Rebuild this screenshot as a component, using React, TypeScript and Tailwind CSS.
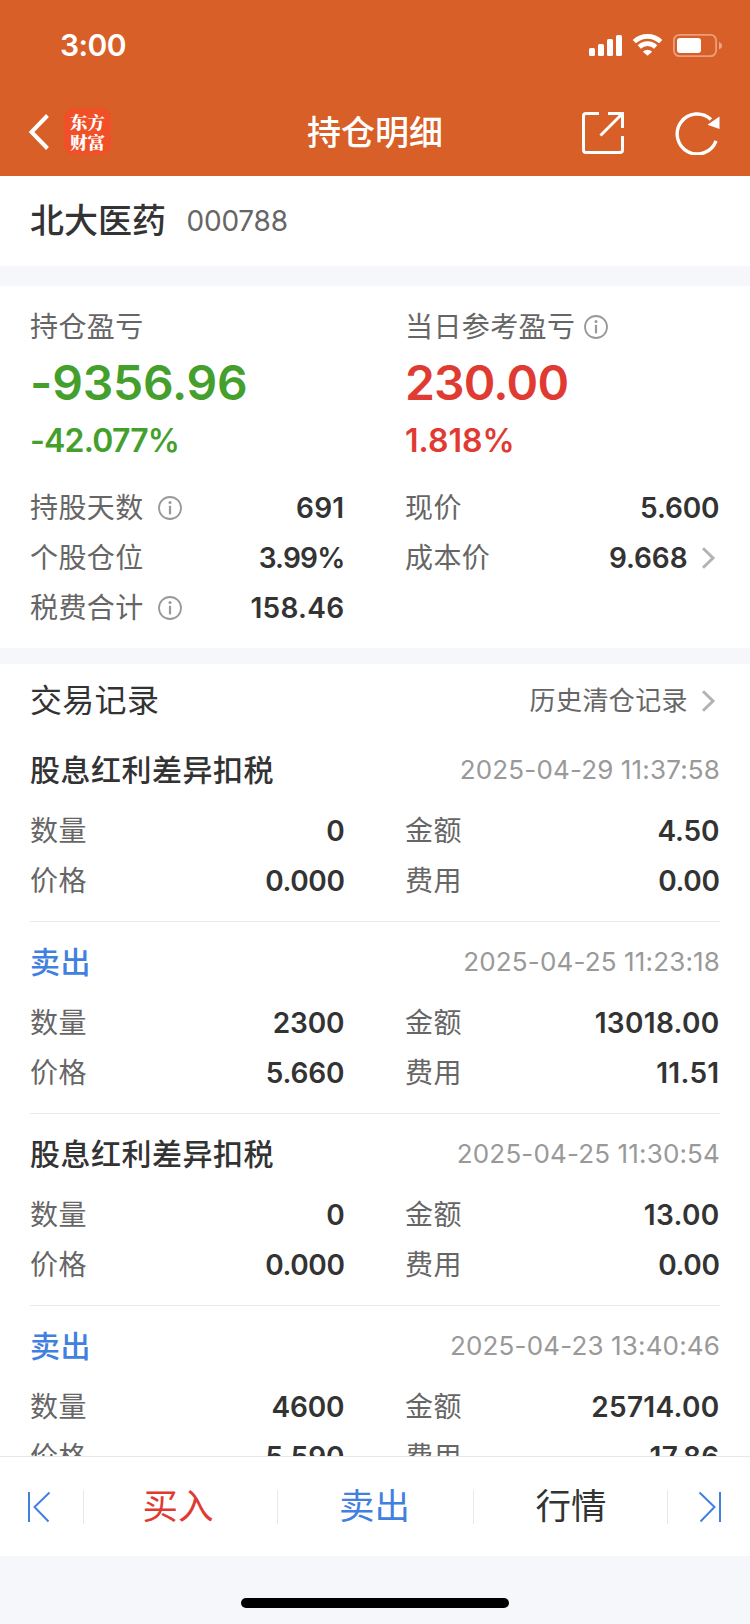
import type { ReactNode } from 'react'
import clsx from 'clsx'

interface TradeRecord {
  type: string
  isSell?: boolean
  time: string
  quantity: string
  amount: string
  price: string
  fee: string
}

const records: TradeRecord[] = [
  { type: '股息红利差异扣税', time: '2025-04-29 11:37:58', quantity: '0', amount: '4.50', price: '0.000', fee: '0.00' },
  { type: '卖出', isSell: true, time: '2025-04-25 11:23:18', quantity: '2300', amount: '13018.00', price: '5.660', fee: '11.51' },
  { type: '股息红利差异扣税', time: '2025-04-25 11:30:54', quantity: '0', amount: '13.00', price: '0.000', fee: '0.00' },
  { type: '卖出', isSell: true, time: '2025-04-23 13:40:46', quantity: '4600', amount: '25714.00', price: '5.590', fee: '17.86' },
]

// Inter's "1" is narrow and its "%" is wide, even the widths out
function valueTracking(value: string) {
  if (value.includes('%')) return 'tracking-[-0.8px]'
  if (value.includes('1')) return 'tracking-[0.3px]'
  if (value.includes('0.0')) return 'tracking-[-0.4px]'
  return 'tracking-[-0.1px]'
}

function InfoIcon({ className }: { className?: string }) {
  return (
    <svg className={clsx('h-6 w-6 shrink-0', className)} viewBox="0 0 24 24" fill="none" stroke="#999" strokeWidth="1.8">
      <circle cx="12" cy="12" r="11" />
      <path d="M12 9.800V18.400" strokeWidth="2.200" />
      <circle cx="12" cy="6.400" r="1.500" fill="#999" stroke="none" />
    </svg>
  )
}

function ChevronRight() {
  return (
    <svg className="ml-[13px] mr-[4px] h-6 w-[15px] shrink-0" viewBox="0 0 15 24" fill="none" stroke="#b3b3b3" strokeWidth="3">
      <path d="M2 2.200L12 12L2 21.800" />
    </svg>
  )
}

function StatRow({ label, value, info, arrow }: { label: string; value: string; info?: boolean; arrow?: boolean }) {
  return (
    <div className="flex h-[50px] items-center text-[28px] leading-[50px]">
      <span className="tracking-[0.4px] text-[#666]">{label}</span>
      {info && <InfoIcon className="ml-[14px]" />}
      <span className={clsx('ml-auto font-semibold text-[#333]', valueTracking(value))}>{value}</span>
      {arrow && <ChevronRight />}
    </div>
  )
}

function TwoColumns({ children }: { children: ReactNode }) {
  return <div className="grid grid-cols-[314.5px_314.5px] justify-between pl-[30px] pr-[30.5px]">{children}</div>
}

function RecordItem({ record }: { record: TradeRecord }) {
  return (
    <div className="h-48 shrink-0">
      <div className="flex h-[76px] items-center justify-between px-[30px] pt-[3px]">
        <span
          className={clsx(
            'text-[30px] font-medium leading-[40px] tracking-[0.5px]',
            record.isSell ? 'text-[#4280e0]' : 'text-[#333]'
          )}
        >
          {record.type}
        </span>
        <span className="text-[26px] leading-[40px] tracking-[0.15px] text-[#999]">{record.time}</span>
      </div>
      <TwoColumns>
        <StatRow label="数量" value={record.quantity} />
        <StatRow label="金额" value={record.amount} />
        <StatRow label="价格" value={record.price} />
        <StatRow label="费用" value={record.fee} />
      </TwoColumns>
      <div className="mx-[30px] mt-[15px] h-px bg-[#ebebeb]" />
    </div>
  )
}

function StatusBar() {
  return (
    <div className="flex h-[90px] items-center justify-between pl-[60px] pr-[27px]">
      <span className="text-[30px] font-semibold leading-[40px] tracking-[-0.6px]">3:00</span>
      <svg className="h-6 w-[134px]" viewBox="0 0 134 24" fill="none">
        <g fill="#fff">
          <rect x="0" y="15" width="6" height="8" rx="1.500" />
          <rect x="9" y="11" width="6" height="12" rx="1.500" />
          <rect x="18" y="6" width="6" height="17" rx="1.500" />
          <rect x="27" y="2" width="6" height="21" rx="1.500" />
        </g>
        <g stroke="#fff" strokeWidth="4.600">
          <path d="M45.300 8.700A19 19 0 0 1 71.700 8.700" />
          <path d="M50.300 14A11.700 11.700 0 0 1 66.700 14" />
        </g>
        <path d="M58.500 22.800L53.900 18.700A6.500 6.500 0 0 1 63.100 18.700Z" fill="#fff" />
        <rect x="84.900" y="1.900" width="42.200" height="21.200" rx="5.500" stroke="#fff" strokeOpacity="0.4" strokeWidth="1.800" />
        <rect x="88" y="5" width="24" height="15" rx="3" fill="#fff" />
        <path d="M130 9V16.500C131.800 15.800 133 14.400 133 12.750S131.800 9.700 130 9Z" fill="#fff" fillOpacity="0.45" />
      </svg>
    </div>
  )
}

function NavBar() {
  return (
    <div className="grid h-[86px] grid-cols-[1fr_auto_1fr] items-center">
      <div className="flex items-center pb-[2px] pl-[28px]">
        <svg className="h-[38px] w-[22px]" viewBox="0 0 22 38" fill="none" stroke="#fff" strokeWidth="4">
          <path d="M19.500 2.500L3.500 19L19.500 35.500" />
        </svg>
        <div className="mb-px ml-[14px] flex h-[47px] w-[47px] flex-col items-center justify-center rounded-[10px] bg-[#ef5027] font-[Noto_Serif_CJK_SC,Noto_Sans_CJK_SC,serif] text-[17.5px] font-black leading-[20px]">
          <span>东方</span>
          <span>财富</span>
        </div>
      </div>
      <h1 className="text-[34px] font-medium leading-[48px]">持仓明细</h1>
      <div className="flex items-center justify-end gap-[50px] pr-[29px]">
        <svg className="h-[44px] w-[44px]" viewBox="0 0 44 44" fill="none" stroke="#fff" strokeWidth="3">
          <path d="M18 2.500H5Q2.500 2.500 2.500 5V39Q2.500 41.500 5 41.500H39Q41.500 41.500 41.500 39V25" />
          <path d="M27 2.500H41.500V17M41 3L19.500 24.500" />
        </svg>
        <svg className="h-[44px] w-[46px]" viewBox="0 0 46 44" fill="none">
          <path d="M41 29.800A20 20 0 1 1 36 8.500" stroke="#fff" strokeWidth="3.400" />
          <path d="M44.500 5.500V18L32.500 13.800Z" fill="#fff" />
        </svg>
      </div>
    </div>
  )
}

function TabDivider() {
  return <div className="h-[34px] w-px bg-[#e8e8e8]" />
}

export default function App() {
  return (
    <div className="flex h-[1624px] w-[750px] flex-col overflow-hidden bg-white font-[Inter,Noto_Sans_CJK_SC,sans-serif] text-[#333]">
      <header className="h-[176px] shrink-0 bg-[#d85f27] text-white">
        <StatusBar />
        <NavBar />
      </header>

      {/* Stock name */}
      <div className="flex h-[90px] shrink-0 items-center pl-[30px]">
        <span className="text-[34px] font-medium leading-[48px]">北大医药</span>
        <span className="ml-[20.5px] text-[28px] leading-[48px] tracking-[-0.2px] text-[#666]">000788</span>
      </div>
      <div className="h-5 shrink-0 bg-[#f6f7fa]" />

      {/* Profit summary */}
      <section className="h-[362px] shrink-0 pt-[21px]">
        <TwoColumns>
          <div>
            <div className="h-10 text-[28px] leading-[40px] tracking-[0.4px] text-[#666]">持仓盈亏</div>
            <div className="h-[70px] text-[48px] font-semibold leading-[71px] tracking-[-0.2px] text-[#459f2c]">-9356.96</div>
            <div className="h-12 text-[32px] font-semibold leading-[47px] tracking-[-0.8px] text-[#459f2c]">-42.077%</div>
          </div>
          <div>
            <div className="flex h-10 items-center text-[28px] leading-[40px] tracking-[0.4px] text-[#666]">
              当日参考盈亏
              <InfoIcon className="ml-[9px]" />
            </div>
            <div className="h-[70px] text-[48px] font-semibold leading-[71px] tracking-[-0.8px] text-[#df3b33]">230.00</div>
            <div className="h-12 text-[32px] font-semibold leading-[47px] text-[#df3b33]">1.818%</div>
          </div>
        </TwoColumns>
        <div className="mt-[18px]">
          <TwoColumns>
            <StatRow label="持股天数" value="691" info />
            <StatRow label="现价" value="5.600" />
            <StatRow label="个股仓位" value="3.99%" />
            <StatRow label="成本价" value="9.668" arrow />
            <StatRow label="税费合计" value="158.46" info />
          </TwoColumns>
        </div>
      </section>
      <div className="h-4 shrink-0 bg-[#f6f7fa]" />

      {/* Trade records */}
      <section className="flex min-h-0 flex-1 flex-col overflow-hidden">
        <div className="flex h-[66px] shrink-0 items-center px-[30px] pt-[7px]">
          <h2 className="text-[32px] leading-[44px] tracking-[0.3px]">交易记录</h2>
          <span className="ml-auto text-[26px] leading-[44px] tracking-[0.4px] text-[#666]">历史清仓记录</span>
          <ChevronRight />
        </div>
        {records.map((record) => (
          <RecordItem key={record.time} record={record} />
        ))}
      </section>

      {/* Bottom actions */}
      <nav className="grid h-[100px] shrink-0 grid-cols-[83px_1px_193px_1px_195px_1px_193px_1px_82px] items-center border-t border-[#e8e8e8] text-[35.5px] leading-[50px]">
        <div className="flex justify-center pr-[5px]">
          <svg className="h-[32px] w-6" viewBox="0 0 24 32" fill="none" stroke="#4280e0" strokeWidth="2">
            <path d="M2 1V31" />
            <path d="M22.500 1.500L7.500 16L21.500 30.500" />
          </svg>
        </div>
        <TabDivider />
        <button className="pr-[5px] text-[#df3b33]">买入</button>
        <TabDivider />
        <button className="pr-[2px] text-[#4280e0]">卖出</button>
        <TabDivider />
        <button className="pl-px">行情</button>
        <TabDivider />
        <div className="flex justify-center pl-[2px]">
          <svg className="h-[32px] w-6" viewBox="0 0 24 32" fill="none" stroke="#4280e0" strokeWidth="2">
            <path d="M22 1V31" />
            <path d="M1.500 1.500L16.500 16L2.500 30.500" />
          </svg>
        </div>
      </nav>
      <footer className="flex h-[68px] shrink-0 justify-center bg-[#f6f7fa] pt-[42px]">
        <div className="h-[10px] w-[268px] rounded-full bg-black" />
      </footer>
    </div>
  )
}
